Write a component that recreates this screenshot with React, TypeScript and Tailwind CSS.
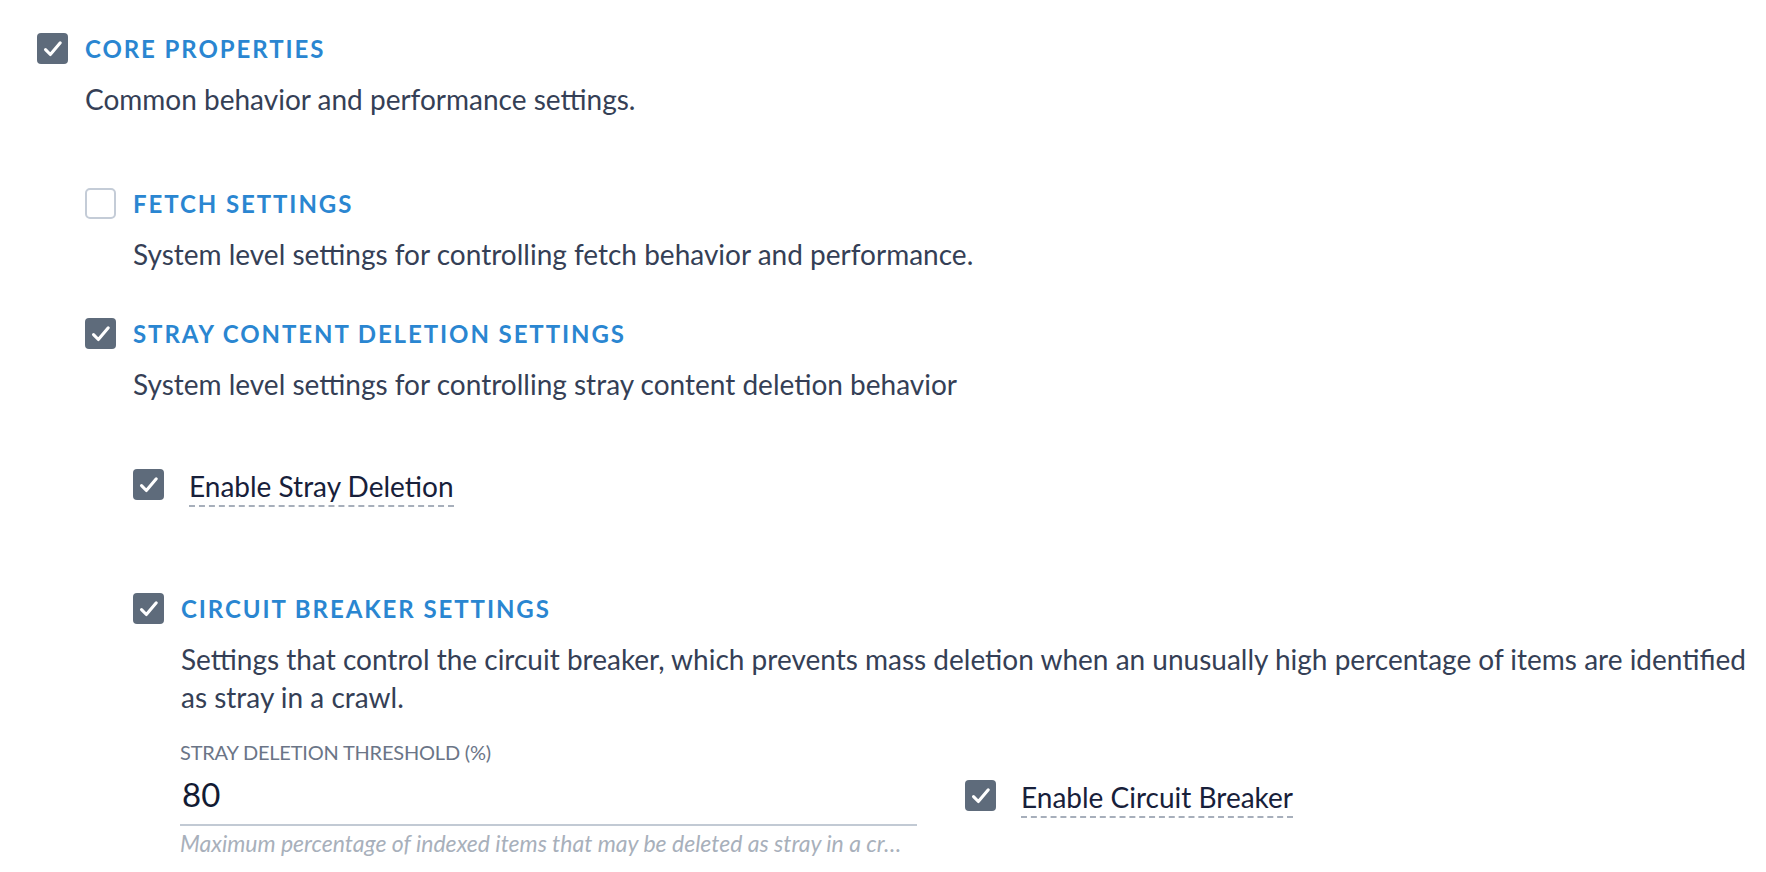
import { ReactNode } from "react";

function CheckBox({ checked }: { checked: boolean }) {
  if (!checked) {
    return <div className="w-[31px] h-[31px] shrink-0 rounded-[5px] border-2 border-[#c4ccd7] bg-white" />;
  }
  return (
    <div className="w-[31px] h-[31px] shrink-0 rounded-[4px] bg-[#5e6b7b] flex items-center justify-center">
      <svg width="22" height="22" viewBox="0 0 20 20" fill="none">
        <path d="M3.2 10.6 L7.6 15 L16.6 4.4" stroke="#fff" strokeWidth="2.8" strokeLinecap="round" strokeLinejoin="round" />
      </svg>
    </div>
  );
}

function Section({
  checked,
  title,
  description,
  children,
  className = "",
}: {
  checked: boolean;
  title: string;
  description: ReactNode;
  children?: ReactNode;
  className?: string;
}) {
  return (
    <div className={className}>
      <div className="flex items-center gap-[17px] h-[31px]">
        <CheckBox checked={checked} />
        <span className="text-[24px] font-bold tracking-[0.08em] text-[#2a86d1] leading-none">{title}</span>
      </div>
      <p className="ml-[48px] mt-[16px] text-[28px] leading-[38px] text-[#353f56]">{description}</p>
      {children && <div className="ml-12">{children}</div>}
    </div>
  );
}

function ToggleField({ label, className = "" }: { label: string; className?: string }) {
  return (
    <div className={`flex items-start gap-[25px] ${className}`}>
      <CheckBox checked />
      <span className="text-[28px] leading-[34px] text-[#17203a] border-b-2 border-dashed border-[#a7afbb] pb-[2px]">
        {label}
      </span>
    </div>
  );
}

export default function App() {
  return (
    <div className="min-h-screen bg-white pl-[37px] pt-[33px] font-['Lato',sans-serif]">
      <Section checked title="CORE PROPERTIES" description="Common behavior and performance settings.">
        <div className="pt-[70px]">
          <Section
            checked={false}
            title="FETCH SETTINGS"
            description="System level settings for controlling fetch behavior and performance."
          />
          <Section
            checked
            className="mt-[45px]"
            title="STRAY CONTENT DELETION SETTINGS"
            description="System level settings for controlling stray content deletion behavior"
          >
            <ToggleField label="Enable Stray Deletion" className="mt-[66px]" />

            <Section
              checked
              className="mt-[86px]"
              title="CIRCUIT BREAKER SETTINGS"
              description="Settings that control the circuit breaker, which prevents mass deletion when an unusually high percentage of items are identified as stray in a crawl."
            >
              <div className="-ml-12 pl-[47px] mt-[24px] flex items-start">
                {/* threshold input */}
                <div className="w-[737px] shrink-0">
                  <label className="block text-[20px] leading-[24px] uppercase text-[#6b7587] tracking-[-0.01em]">
                    Stray Deletion Threshold (%)
                  </label>
                  <div className="border-b-2 border-[#c2cad4] pt-[10px] pb-[10px]">
                    <span className="block text-[33px] leading-[40px] text-[#121b33] pl-[2px]">80</span>
                  </div>
                  <p className="mt-[3px] truncate text-[23px] italic leading-[28px] text-[#a8b0bb] pr-[12px]">
                    Maximum percentage of indexed items that may be deleted as stray in a crawl.
                  </p>
                </div>
                <ToggleField label="Enable Circuit Breaker" className="ml-[48px] mt-[40px]" />
              </div>
            </Section>
          </Section>
        </div>
      </Section>
    </div>
  );
}
